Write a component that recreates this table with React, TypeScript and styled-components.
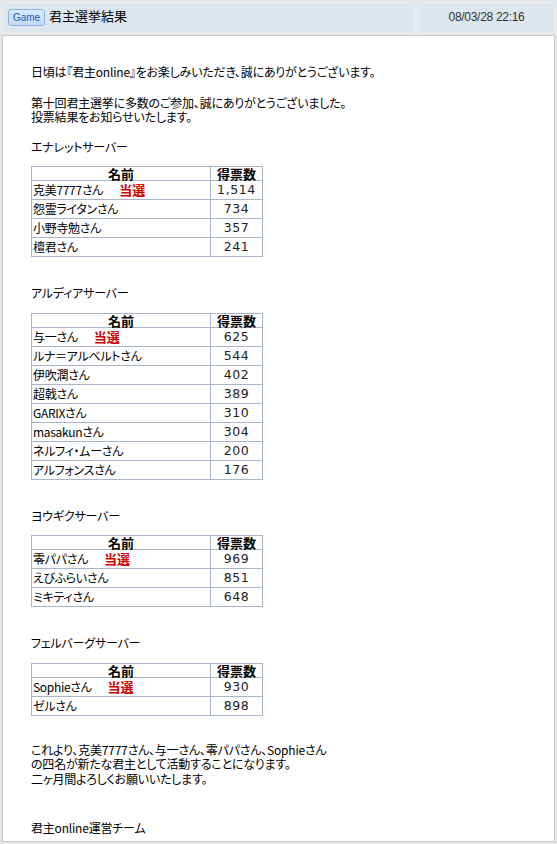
import React from "react";
import styled, { createGlobalStyle } from "styled-components";

const Global = createGlobalStyle`
  html, body { margin: 0; padding: 0; background: #fff; }
  body { font-family: "Noto Sans CJK JP", "Liberation Sans", sans-serif; }
`;

const Frame = styled.div`
  width: 557px;
  height: 844px;
  box-sizing: border-box;
  background: #e6e6e6;
  padding: 2px;
  display: grid;
  grid-template-rows: 31px 1fr;
  row-gap: 2px;
`;

const HeaderRow = styled.div`
  display: grid;
  grid-template-columns: 1fr 137px;
  column-gap: 3px;
`;

const HeaderCell = styled.div<{ $center?: boolean }>`
  background: #dee6ed;
  border: 1px solid #e8edf1;
  display: flex;
  align-items: center;
  justify-content: ${(p) => (p.$center ? "center" : "flex-start")};
  padding: 0 0 0 ${(p) => (p.$center ? "0" : "5px")};
  gap: 4px;
`;

const Badge = styled.span`
  display: inline-flex;
  align-items: center;
  justify-content: center;
  width: 35px;
  height: 15px;
  border: 1px solid #8db2df;
  border-radius: 3px;
  background: linear-gradient(#d8e9fd, #c3dbf9);
  color: #1f5bb8;
  font-family: "Liberation Sans", Arial, sans-serif;
  font-size: 10px;
`;

const Title = styled.span`
  font-size: 13px;
  color: #000;
  line-height: 15px;
  margin-top: -4px;
`;

const DateText = styled.span`
  font-family: "Liberation Sans", Arial, sans-serif;
  font-size: 12px;
  color: #333;
  letter-spacing: -0.3px;
  margin-top: -2px;
`;

const Body = styled.div`
  background: #fff;
  border: 1px solid #c9c9c9;
  padding: 29px 0 0 28px;
  font-size: 12px;
  line-height: 14.5px;
  color: #000;
  font-feature-settings: "palt";
`;

const Para = styled.p<{ $mt: number }>`
  margin: ${(p) => p.$mt}px 0 0 0;
  letter-spacing: -0.2px;
`;

const Table = styled.table`
  border-collapse: collapse;
  width: 229px;
  margin-top: 12px;
  table-layout: fixed;
`;

const Th = styled.th<{ $w: number }>`
  width: ${(p) => p.$w}px;
  border: 1px solid #a9b5c8;
  padding: 0;
  height: 13px;
  line-height: 13px;
  font-size: 13px;
  font-weight: bold;
  text-align: center;
  color: #000;
  font-feature-settings: normal;
`;

const NameCell = styled.td`
  border: 1px solid #a9b5c8;
  padding: 0 0 0 1px;
  height: 18px;
  line-height: 18px;
  font-size: 12px;
  letter-spacing: -0.3px;
  white-space: nowrap;
`;

const VoteCell = styled.td`
  border: 1px solid #a9b5c8;
  padding: 0;
  height: 18px;
  line-height: 18px;
  text-align: center;
  font-family: "DejaVu Sans", Verdana, sans-serif;
  font-size: 12.5px;
  letter-spacing: 0.6px;
  color: #222;
`;

const Win = styled.span`
  color: #d40000;
  font-weight: bold;
  font-size: 13px;
  margin-left: 16px;
  letter-spacing: 0;
  font-feature-settings: normal;
`;

type Row = { name: string; votes: string; win?: boolean };
type Server = { title: string; rows: Row[] };

const servers: Server[] = [
  {
    title: "エナレットサーバー",
    rows: [
      { name: "克美7777さん", votes: "1,514", win: true },
      { name: "怨霊ライタンさん", votes: "734" },
      { name: "小野寺勉さん", votes: "357" },
      { name: "檀君さん", votes: "241" },
    ],
  },
  {
    title: "アルディアサーバー",
    rows: [
      { name: "与一さん", votes: "625", win: true },
      { name: "ルナ＝アルベルトさん", votes: "544" },
      { name: "伊吹潤さん", votes: "402" },
      { name: "超戟さん", votes: "389" },
      { name: "GARIXさん", votes: "310" },
      { name: "masakunさん", votes: "304" },
      { name: "ネルフィ・ムーさん", votes: "200" },
      { name: "アルフォンスさん", votes: "176" },
    ],
  },
  {
    title: "ヨウギクサーバー",
    rows: [
      { name: "零パパさん", votes: "969", win: true },
      { name: "えびふらいさん", votes: "851" },
      { name: "ミキティさん", votes: "648" },
    ],
  },
  {
    title: "フェルバーグサーバー",
    rows: [
      { name: "Sophieさん", votes: "930", win: true },
      { name: "ゼルさん", votes: "898" },
    ],
  },
];

export default function App() {
  return (
    <>
      <Global />
      <Frame>
        <HeaderRow>
          <HeaderCell>
            <Badge>Game</Badge>
            <Title>君主選挙結果</Title>
          </HeaderCell>
          <HeaderCell $center>
            <DateText>08/03/28 22:16</DateText>
          </HeaderCell>
        </HeaderRow>
        <Body>
          <Para $mt={0}>日頃は『君主online』をお楽しみいただき、誠にありがとうございます。</Para>
          <Para $mt={16}>
            第十回君主選挙に多数のご参加、誠にありがとうございました。
            <br />
            投票結果をお知らせいたします。
          </Para>
          {servers.map((s, i) => (
            <React.Fragment key={s.title}>
              <Para $mt={i === 0 ? 15 : 29}>{s.title}</Para>
              <Table>
                <thead>
                  <tr>
                    <Th $w={178}>名前</Th>
                    <Th $w={51}>得票数</Th>
                  </tr>
                </thead>
                <tbody>
                  {s.rows.map((r) => (
                    <tr key={r.name}>
                      <NameCell>
                        {r.name}
                        {r.win && <Win>当選</Win>}
                      </NameCell>
                      <VoteCell>{r.votes}</VoteCell>
                    </tr>
                  ))}
                </tbody>
              </Table>
            </React.Fragment>
          ))}
          <Para $mt={27}>
            これより、克美7777さん、与一さん、零パパさん、Sophieさん
            <br />
            の四名が新たな君主として活動することになります。
            <br />
            二ヶ月間よろしくお願いいたします。
          </Para>
          <Para $mt={35}>君主online運営チーム</Para>
        </Body>
      </Frame>
    </>
  );
}
